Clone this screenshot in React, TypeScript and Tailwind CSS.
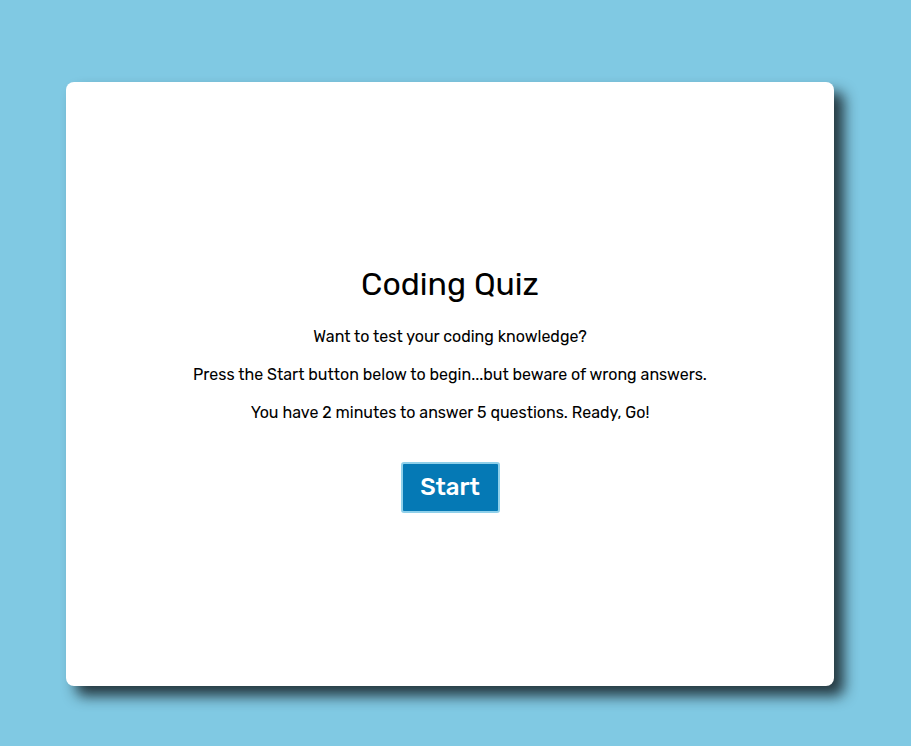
export default function App() {
    return (
        <div className="min-h-screen w-full bg-[#80c9e3] pt-[82px] pl-[66px] font-['Rubik','Noto_Sans',sans-serif]" style={{ height: 746 }}>
            <div className="w-[768px] h-[604px] bg-white rounded-lg shadow-[10px_10px_14px_rgba(20,30,35,0.85)] flex flex-col items-center justify-center text-black">
                <h1 className="text-[32px] leading-[40px] mb-[22px] mt-[8px]">Coding Quiz</h1>
                <p className="text-[16px] leading-[22px]">Want to test your coding knowledge?</p>
                <p className="text-[16px] leading-[22px] mt-[16px]">Press the Start button below to begin...but beware of wrong answers.</p>
                <p className="text-[16px] leading-[22px] mt-[16px]">You have 2 minutes to answer 5 questions. Ready, Go!</p>
                <button className="mt-[38px] w-[99px] h-[51px] bg-[#0579b5] border-2 border-[#8fd0ea] rounded-[3px] text-white text-[24px] font-medium">
                    Start
                </button>
            </div>
        </div>
    );
}
